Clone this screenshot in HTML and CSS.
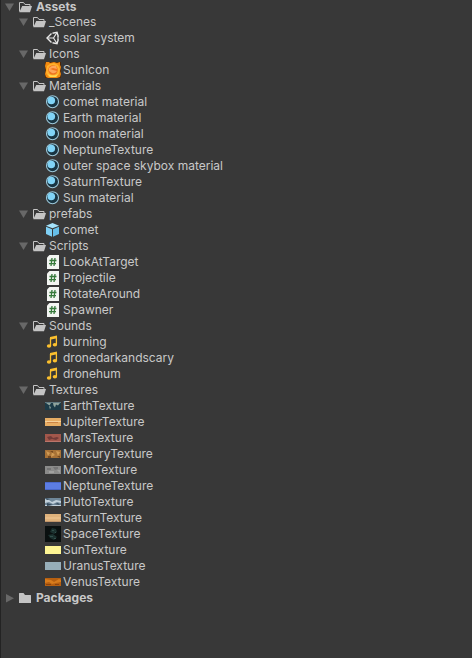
FILE: index.html
```html
<!DOCTYPE html>
<html lang="en">
<head>
  <meta charset="UTF-8">
  <meta name="viewport" content="width=device-width, initial-scale=1.0">
  <title>Project</title>
  <link rel="stylesheet" href="styles.css">
</head>
<body>

  <!-- Shared icons -->
  <svg class="sprite">
    <symbol id="arrow" viewBox="0 0 14 16">
      <path d="M2 4.500h9L6.500 12z" fill="#686868"/>
    </symbol>
    <symbol id="arrow-right" viewBox="0 0 14 16">
      <path d="M3 4v8.500L11 8.200z" fill="#686868"/>
    </symbol>
    <symbol id="folder-open" viewBox="0 0 16 16">
      <path d="M2.500 12.500V3.500h4l1.500 2h5v2" fill="none" stroke="#c4c4c4"/>
      <path d="M5.200 7H15l-2 6.200H2.300z" fill="#c4c4c4"/>
    </symbol>
    <symbol id="folder" viewBox="0 0 16 16">
      <path d="M2 3.500q0-.5.500-.5h4l1.500 2h5.500q.5 0 .5.500V13H2z" fill="#c4c4c4"/>
    </symbol>
    <symbol id="material" viewBox="0 0 16 16">
      <circle cx="7.500" cy="7.700" r="6" fill="#183442" stroke="#9cc8da" stroke-width="1.100"/>
      <circle cx="6.300" cy="6.500" r="3.800" fill="#81d4f7"/>
    </symbol>
    <symbol id="script" viewBox="0 0 16 16">
      <path d="M4.500 1H14v14H2V3.500z" fill="#f3f5f2"/>
      <path d="M7 4L6 12M10 4L9 12M4.500 6.500h7M4 9.700h7" fill="none" stroke="#367a3b" stroke-width="1.300"/>
    </symbol>
    <symbol id="audio" viewBox="0 0 16 16">
      <path d="M5 3l7-1.500v2.700L5 5.700z" fill="#fcc02e"/>
      <path d="M5.500 4v8M11.400 3v7.500" stroke="#fcc02e" stroke-width="1.300"/>
      <ellipse cx="4" cy="12" rx="2.200" ry="1.700" fill="#fcc02e"/>
      <ellipse cx="9.900" cy="10.700" rx="2.200" ry="1.700" fill="#fcc02e"/>
    </symbol>
  </svg>

  <main class="tree">
    <details open>
      <summary class="row root first"><svg class="arrow"><use href="#arrow"/></svg><svg class="icon"><use href="#folder-open"/></svg><span class="name">Assets</span></summary>
      <div class="children">

        <!-- Scenes -->
        <details open>
          <summary class="row"><svg class="arrow"><use href="#arrow"/></svg><svg class="icon"><use href="#folder-open"/></svg><span class="name">_Scenes</span></summary>
          <ul class="children">
            <li class="row">
              <svg class="icon" viewBox="0 0 16 16">
                <path d="M6.500 3.500L2 8l4.500 4.500M7.500 3.200l4.500-1 1.300 4.300M13.300 9.500L12 13.800l-4.500-1" fill="none" stroke="#e8e8e8" stroke-width="1.400"/>
                <path d="M2 8h6.500L12 2.500M8.500 8l3.500 5.500M13 6v4" fill="none" stroke="#e8e8e8" stroke-width="1.200"/>
              </svg>
              <span class="name">solar system</span>
            </li>
          </ul>
        </details>

        <!-- Icons -->
        <details open>
          <summary class="row"><svg class="arrow"><use href="#arrow"/></svg><svg class="icon"><use href="#folder-open"/></svg><span class="name">Icons</span></summary>
          <ul class="children">
            <li class="row">
              <svg class="icon" viewBox="0 0 16 16">
                <path d="M0 0h16v16H0z" fill="#4d2606"/>
                <path d="M1 0h3l1 1 4-1 3 1 3-1v3l1 2-1 4 1 3-1 3-3 1H3l-2-1-1-3 1-4-1-4z" fill="#f28a10"/>
                <path d="M2 4l3-2 4-1 4 2 2 4-1 5-3 3H4l-3-4z" fill="#ffb02c"/>
                <circle cx="8" cy="8" r="4.800" fill="#f0741f"/>
                <path d="M4 6q3-3 7-2l1 3-4-1-3 1 3 1 4 1q-2 3-5 2L4 9z" fill="#ffa65a"/>
                <path d="M3 12q5 3 10 0l-2 3H5z" fill="#ffdc55"/>
              </svg>
              <span class="name">SunIcon</span>
            </li>
          </ul>
        </details>

        <!-- Materials -->
        <details open>
          <summary class="row"><svg class="arrow"><use href="#arrow"/></svg><svg class="icon"><use href="#folder-open"/></svg><span class="name">Materials</span></summary>
          <ul class="children">
            <li class="row"><svg class="icon"><use href="#material"/></svg><span class="name">comet material</span></li>
            <li class="row"><svg class="icon"><use href="#material"/></svg><span class="name">Earth material</span></li>
            <li class="row"><svg class="icon"><use href="#material"/></svg><span class="name">moon material</span></li>
            <li class="row"><svg class="icon"><use href="#material"/></svg><span class="name">NeptuneTexture</span></li>
            <li class="row"><svg class="icon"><use href="#material"/></svg><span class="name">outer space skybox material</span></li>
            <li class="row"><svg class="icon"><use href="#material"/></svg><span class="name">SaturnTexture</span></li>
            <li class="row"><svg class="icon"><use href="#material"/></svg><span class="name">Sun material</span></li>
          </ul>
        </details>

        <!-- Prefabs -->
        <details open>
          <summary class="row"><svg class="arrow"><use href="#arrow"/></svg><svg class="icon"><use href="#folder-open"/></svg><span class="name">prefabs</span></summary>
          <ul class="children">
            <li class="row">
              <svg class="icon" viewBox="0 0 16 16">
                <path d="M7.500 1L14 3.700 7.500 6.300 1 3.700z" fill="#a4e2fb"/>
                <path d="M1 4.700l6 2.500v7.600L1 12z" fill="#7fd0f5"/>
                <path d="M14 4.700L8 7.200v7.600l6-2.800z" fill="#66bfe9"/>
              </svg>
              <span class="name">comet</span>
            </li>
          </ul>
        </details>

        <!-- Scripts -->
        <details open>
          <summary class="row"><svg class="arrow"><use href="#arrow"/></svg><svg class="icon"><use href="#folder-open"/></svg><span class="name">Scripts</span></summary>
          <ul class="children">
            <li class="row"><svg class="icon"><use href="#script"/></svg><span class="name">LookAtTarget</span></li>
            <li class="row"><svg class="icon"><use href="#script"/></svg><span class="name">Projectile</span></li>
            <li class="row"><svg class="icon"><use href="#script"/></svg><span class="name">RotateAround</span></li>
            <li class="row"><svg class="icon"><use href="#script"/></svg><span class="name">Spawner</span></li>
          </ul>
        </details>

        <!-- Sounds -->
        <details open>
          <summary class="row"><svg class="arrow"><use href="#arrow"/></svg><svg class="icon"><use href="#folder-open"/></svg><span class="name">Sounds</span></summary>
          <ul class="children">
            <li class="row"><svg class="icon"><use href="#audio"/></svg><span class="name">burning</span></li>
            <li class="row"><svg class="icon"><use href="#audio"/></svg><span class="name">dronedarkandscary</span></li>
            <li class="row"><svg class="icon"><use href="#audio"/></svg><span class="name">dronehum</span></li>
          </ul>
        </details>

        <!-- Textures -->
        <details open>
          <summary class="row"><svg class="arrow"><use href="#arrow"/></svg><svg class="icon"><use href="#folder-open"/></svg><span class="name">Textures</span></summary>
          <ul class="children">
            <li class="row">
              <svg class="icon" viewBox="0 0 16 16">
                <path d="M0 4h16v8H0z" fill="#1c3b48"/>
                <path d="M1 5h5L4.500 7.500zM8 5h7l-2 2.500-2-1-1 3-1.500-2zM4 8l2 1-1 2.500z" fill="#8fa39c"/>
                <path d="M0 4h16v1H0z" fill="#5f7880"/>
              </svg>
              <span class="name">EarthTexture</span>
            </li>
            <li class="row">
              <svg class="icon" viewBox="0 0 16 16">
                <path d="M0 4h16v8H0z" fill="#e7ad64"/>
                <path d="M0 7h16v1H0z" fill="#f4d09a"/>
                <path d="M2 8h11v1H2z" fill="#cc8445"/>
              </svg>
              <span class="name">JupiterTexture</span>
            </li>
            <li class="row">
              <svg class="icon" viewBox="0 0 16 16">
                <path d="M0 4h16v8H0z" fill="#a2574b"/>
                <path d="M2 7l4-1 2 2 4-1 2 1-3 2-4-1-3 1z" fill="#713b38"/>
                <path d="M0 11h16v1H0z" fill="#bb756a"/>
              </svg>
              <span class="name">MarsTexture</span>
            </li>
            <li class="row">
              <svg class="icon" viewBox="0 0 16 16">
                <path d="M0 4h16v8H0z" fill="#a87236"/>
                <path d="M1 5l4 2-2 3zM7 6l3 3-4 2zM11 5l4 1-2 4z" fill="#d09b55"/>
                <path d="M5 5h3v2zM3 10h3v2H3zM12 10h3v2z" fill="#76491f"/>
              </svg>
              <span class="name">MercuryTexture</span>
            </li>
            <li class="row">
              <svg class="icon" viewBox="0 0 16 16">
                <path d="M0 4h16v8H0z" fill="#8b8b8a"/>
                <path d="M2 6h4v2H2zM8 5h5v2l-3 1z" fill="#747474"/>
                <path d="M4 9h5v2H4zM12 8h3v3z" fill="#a1a1a0"/>
              </svg>
              <span class="name">MoonTexture</span>
            </li>
            <li class="row">
              <svg class="icon" viewBox="0 0 16 16">
                <path d="M0 4h16v8H0z" fill="#5c7de4"/>
                <path d="M0 4h16v1H0zM0 11h16v1H0z" fill="#4a68ca"/>
              </svg>
              <span class="name">NeptuneTexture</span>
            </li>
            <li class="row">
              <svg class="icon" viewBox="0 0 16 16">
                <path d="M0 4h16v8H0z" fill="#6f8698"/>
                <path d="M0 5l4 1 3 2 4-2 5 1v2l-4-1-4 2-4-2-4 1zM0 11h16v1H0z" fill="#c2d0da"/>
                <path d="M0 4l5 1-3 1zM2 9l3 1 3 1-6 1zM10 10l3-1 2 2z" fill="#34495a"/>
              </svg>
              <span class="name">PlutoTexture</span>
            </li>
            <li class="row">
              <svg class="icon" viewBox="0 0 16 16">
                <path d="M0 4h16v8H0z" fill="#dfb27c"/>
                <path d="M0 7h16v2H0z" fill="#e8bd88"/>
                <path d="M0 11h16v1H0z" fill="#c0946a"/>
              </svg>
              <span class="name">SaturnTexture</span>
            </li>
            <li class="row">
              <svg class="icon" viewBox="0 0 16 16">
                <path d="M0 0h16v16H0z" fill="#0a1010"/>
                <path d="M7 2l4 1 1 3-3 2-4-2zM3 9l5-1 4 3-3 3-4-2z" fill="#1b312f"/>
                <path d="M7 4h2v1H7zM10 6h1v1h-1zM5 10h3v1H5zM9 12h2v1H9z" fill="#33504b"/>
              </svg>
              <span class="name">SpaceTexture</span>
            </li>
            <li class="row">
              <svg class="icon" viewBox="0 0 16 16">
                <path d="M0 4h16v8H0z" fill="#fdf493"/>
              </svg>
              <span class="name">SunTexture</span>
            </li>
            <li class="row">
              <svg class="icon" viewBox="0 0 16 16">
                <path d="M0 4h16v8H0z" fill="#97aeb9"/>
              </svg>
              <span class="name">UranusTexture</span>
            </li>
            <li class="row">
              <svg class="icon" viewBox="0 0 16 16">
                <path d="M0 4h16v8H0z" fill="#b65f10"/>
                <path d="M0 5l6 1 3 2 5-3 2 1v2l-5 1-4 1-3-2-4 1z" fill="#d87c1c"/>
                <path d="M1 10h5v1H1zM10 10h4v1h-4z" fill="#8d430b"/>
              </svg>
              <span class="name">VenusTexture</span>
            </li>
          </ul>
        </details>
      </div>
    </details>

    <details>
      <summary class="row root"><svg class="arrow"><use href="#arrow-right"/></svg><svg class="icon"><use href="#folder"/></svg><span class="name">Packages</span></summary>
    </details>
  </main>

</body>
</html>
```
FILE: styles.css
```css
html, body {
  margin: 0;
  padding: 0;
  background-color: #383838;
}

body {
  min-height: 100vh;
  box-sizing: border-box;
  border-left: 1px solid #232323;
  overflow: hidden;
  font-family: Inter, "Liberation Sans", sans-serif;
  font-size: 12px;
  line-height: 16px;
  color: #c8c8c8;
}

.sprite {
  display: none;
}

.tree {
  padding-left: 2px;
}

.children {
  margin: 0;
  padding: 0 0 0 14px;
  list-style: none;
}

/* items have no arrow, so they keep its width free */
ul.children {
  padding-left: 28px;
}

.row {
  display: flex;
  align-items: center;
  height: 16px;
  white-space: nowrap;
  cursor: default;
}

summary::-webkit-details-marker {
  display: none;
}

.root {
  font-weight: bold;
}

/* sits tight under the top edge */
.first {
  height: 14px;
  line-height: 14px;
}

.arrow {
  flex: none;
  width: 14px;
  height: 16px;
}

.icon {
  flex: none;
  width: 16px;
  height: 16px;
  margin-right: 2px;
}

.root .icon {
  margin-right: 3px;
}
```
